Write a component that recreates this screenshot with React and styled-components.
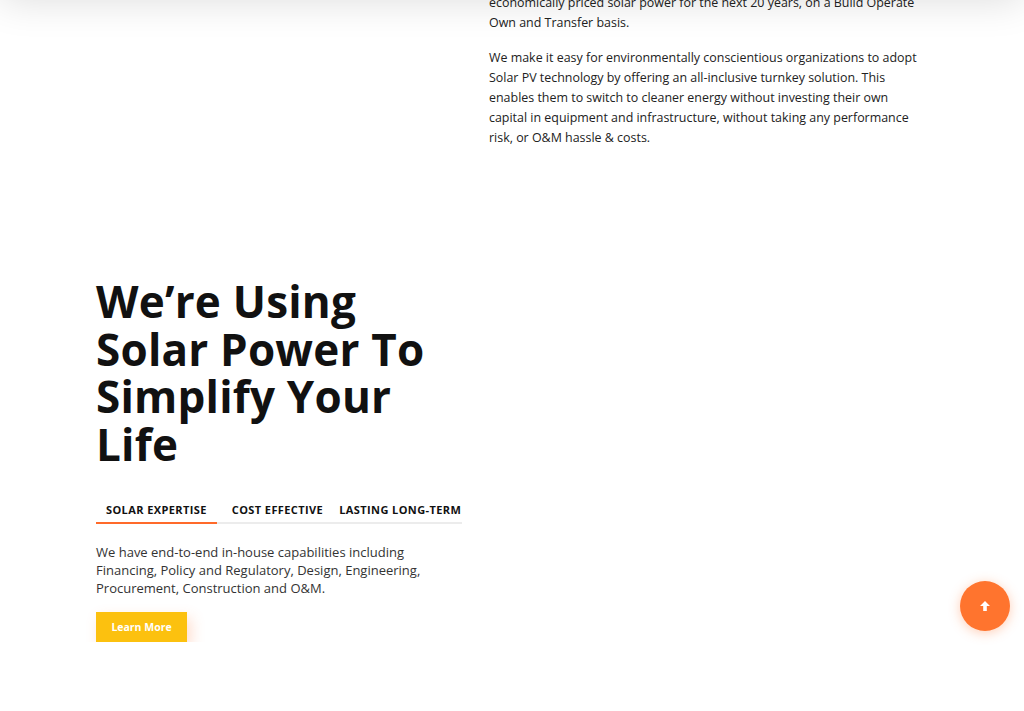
import styled, { createGlobalStyle } from "styled-components";

const GlobalStyle = createGlobalStyle`
  html, body {
    margin: 0;
    padding: 0;
    background: #fff;
    font-family: "Open Sans", "Liberation Sans", sans-serif;
    color: #222;
    overflow: hidden;
  }
`;

const App = () => {
  return (
    <>
      <GlobalStyle />
      <HeaderShadow />
      <Page>
        <AboutRow>
          <div />
          <AboutText>
            <p>
              economically priced solar power for the next 20 years, on a Build Operate
              <br />
              Own and Transfer basis.
            </p>
            <p>
              We make it easy for environmentally conscientious organizations to adopt
              Solar PV technology by offering an all-inclusive turnkey solution. This
              enables them to switch to cleaner energy without investing their own
              capital in equipment and infrastructure, without taking any performance
              risk, or O&amp;M hassle &amp; costs.
            </p>
          </AboutText>
        </AboutRow>

        <Feature>
          <Title>We’re Using Solar Power To Simplify Your Life</Title>
          <Tabs>
            <Tab active>Solar Expertise</Tab>
            <Tab>Cost Effective</Tab>
            <Tab>Lasting Long-Term</Tab>
          </Tabs>
          <Copy>
            We have end-to-end in-house capabilities including Financing, Policy and
            Regulatory, Design, Engineering, Procurement, Construction and O&amp;M.
          </Copy>
          <Button>Learn More</Button>
        </Feature>
      </Page>
      <ScrollTop aria-label="Back to top">
        <svg width="12" height="12" viewBox="0 0 12 12">
          <path d="M6 1 L11 6 H7.8 V11 H4.2 V6 H1 Z" fill="#fff" />
        </svg>
      </ScrollTop>
    </>
  );
};

const HeaderShadow = styled.div`
  position: fixed;
  top: -60px;
  left: 0;
  right: 0;
  height: 60px;
  background: #fff;
  box-shadow: 0 0 40px rgba(0, 0, 0, 0.14);
  z-index: 5;
`;

const Page = styled.div`
  width: 832px;
  padding-left: 96px;
  margin-top: -7px;
`;

const AboutRow = styled.section`
  display: grid;
  grid-template-columns: 393px 1fr;
`;

const AboutText = styled.div`
  p {
    margin: 0 0 15px;
    font-size: 12.45px;
    line-height: 20px;
    color: #222;
  }
`;

const Feature = styled.section`
  width: 366px;
  padding-top: 115px;
`;

const Title = styled.h2`
  margin: 0;
  font-size: 44px;
  line-height: 47.5px;
  font-weight: 700;
  color: #111;
  letter-spacing: 0.2px;
`;

const Tabs = styled.div`
  display: flex;
  margin-top: 29px;
  border-bottom: 2px solid #ececec;
`;

const Tab = styled.div`
  padding: 5px 8px;
  margin-bottom: -2px;
  font-size: 11px;
  font-weight: 700;
  letter-spacing: 0.4px;
  text-transform: uppercase;
  color: #111;
  white-space: nowrap;
  border-bottom: 2px solid ${(p) => (p.active ? "#ff6a2a" : "transparent")};
  &:first-child {
    padding: 5px 10px;
    margin-right: 7px;
  }
`;

const Copy = styled.p`
  margin: 19px 0 0;
  font-size: 13px;
  line-height: 18px;
  color: #333;
`;

const Button = styled.button`
  display: block;
  margin-top: 15px;
  width: 91px;
  height: 30px;
  border: 0;
  background: #fcc10f;
  color: #fff;
  font-family: inherit;
  font-size: 10.5px;
  font-weight: 700;
  box-shadow: 4px 6px 14px rgba(255, 120, 60, 0.25);
  cursor: pointer;
`;

const ScrollTop = styled.button`
  position: fixed;
  right: 14px;
  top: 581px;
  width: 50px;
  height: 50px;
  border-radius: 50%;
  border: 0;
  background: #ff742e;
  box-shadow: 0 2px 12px rgba(255, 116, 46, 0.35);
  display: flex;
  align-items: center;
  justify-content: center;
  cursor: pointer;
`;

export default App;
